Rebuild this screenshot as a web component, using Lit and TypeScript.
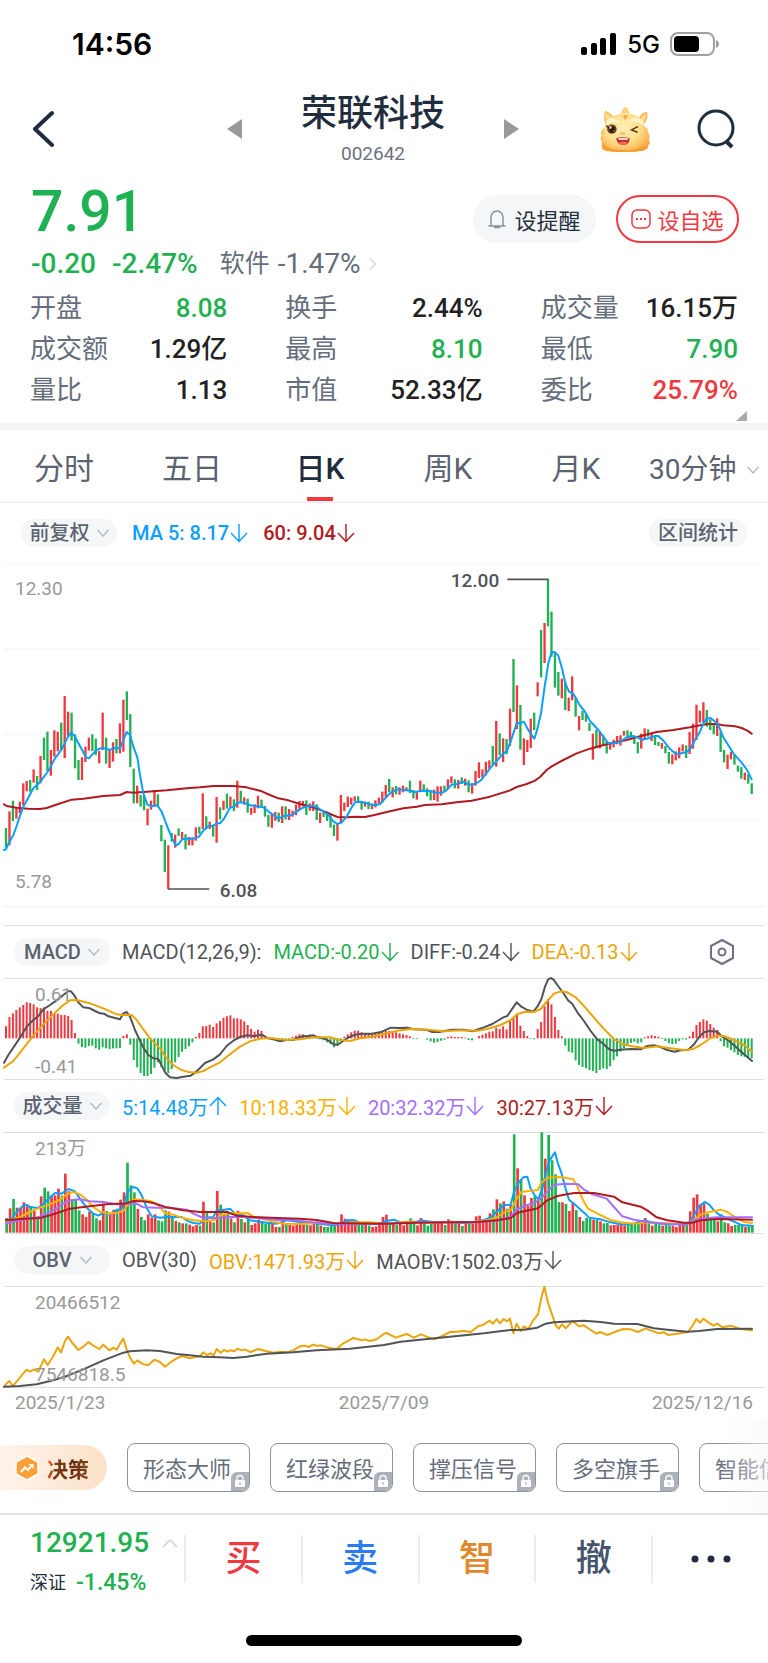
import { LitElement, html, svg, css } from "lit";
import { customElement, property, state } from "lit/decorators.js";
import { classMap } from "lit/directives/class-map.js";

const UP = "#f0393f";
const DOWN = "#1fb152";

// Chart drawings use three units per pixel.
const FIRST_X = 18;
const STEP = 10.357;
const barX = (i: number) => FIRST_X + STEP * i;

type Candle = { up: boolean; high: number; low: number };

const candles = (shift: number, text: string): Candle[] =>
  text
    .trim()
    .split(/\s+/)
    .map((item) => {
      const [high, low] = item.slice(1).split("-").map(Number);
      return { up: item[0] === "r", high: high + shift, low: low + shift };
    });

const line = (...parts: [number, number, string][]) =>
  parts
    .flatMap(([dx, dy, text]) =>
      text
        .trim()
        .split(/\s+/)
        .map((p) => {
          const [x, y] = p.split(",").map(Number);
          return `${x + dx},${y + dy}`;
        })
    )
    .join(" ");

const nums = (text: string) => text.trim().split(/\s+/).map(Number);

const PRICE: Candle[] = [
  ...candles(0, `g834-893 r784-886 g752-813 r772-806 r755-790 r700-765 r693-724 g690-725 r658-698 g678-720
    r618-700 g563-630 g545-663 r600-677 r541-620 r545-604 g518-600 r438-624 r485-560 g488-572
    g553-655 g630-690 r622-690 r590-636 r563-602 g553-603 g566-615 r603-640 r488-600 g563-641
    r598-654 r577-635 g567-610 r520-610 r449-605 g424-510 g492-651 g656-760 r707-760 g735-770
    g738-781 r776-826 r752-779 r720-770 g733-768 g825-874 g869-966 r886-1017 g849-875 r854-893
    g835-858 r846-868 g853-898 r861-886 r862-886 r832-872 g830-851 r730-837 g799-838 r815-837
    g824-860 r741-878 g772-808 r752-780 g731-776 r740-773 g748-783 r692-773 g722-755 r742-764
    g746-788 r773-794 r763-789 r737-775`),
  ...candles(450, `g299-322 g318-350 g345-380 r342-383 r336-362 g338-366 r319-369 g319-358 r327-360 r332-350
    r314-345 r303-330 r303-320 g301-345 r310-332 r304-333 g313-360 r338-369 g335-351 g335-363
    g345-383 g374-408 r370-422 r285-370 r308-333 r290-321 r293-314 r289-304 g289-309 g305-329
    r305-320 g305-327 r311-327 r301-322 r293-310 r275-308 r255-292 g237-277 r262-292 g258-283
    r262-284 r257-277 r262-273 g242-279 g270-295 r275-299 r242-275 g253-275 g265-289 g270-301
    r269-300 r259-305 r259-287 g257-275 r238-265 r229-250 g238-265 r240-266 g232-252 r236-257
    g241-277 r250-281 r213-257 r187-234 r208-233 r185-226 r181-206 g138-195 r63-200 g100-165
    r115-186 g117-163`),
  ...candles(0, `r476-587 g327-486 r406-537 g465-599 r565-645 r570-606 r506-594 g488-540 r397-439 g240-382
    r219-339 g88-229 g185-320 g305-413 g366-437 r386-445 g395-480 r443-483 r379-451 g443-500
    r498-541 g482-510 g490-515 g519-543 r551-629 g540-595 r544-595 g556-588 g573-610 r577-599
    r569-592 r558-583 r556-587 r543-557 g541-565 g545-563 g556-582 g576-610 r551-596 r535-570
    g538-560 r552-573 g560-585 g576-588 r579-596 g588-610 g606-641 r613-643 r604-631 r592-625
    r583-604 g586-624 r546-612 r521-596 r464-570 r482-518 r457-517 g480-530 g508-540 g524-553
    r505-558 g545-606 g600-637 r614-657 r605-628 g613-644 g647-665 g651-686 r668-690 g674-701
    g700-732`),
];

const MA5 = line(
  [0, 0, `12,900 18,898 25,882 40,855 50,828 60,797 70,770 80,752 100,715 121,695 132,680 145,663 165,625 185,598
    204,560 214,547 225,560 245,598 258,622 267,625 277,613 290,600 308,593 318,597 330,599 345,594 360,595 370,570
    380,546 390,555 400,590 412,622 420,675 430,730 442,764 455,769 472,766 485,785 500,825 515,862 527,886 536,882
    546,868 556,866 580,866 597,860 610,842 625,828 640,827 650,820 660,820 672,806 690,773 702,770 712,758 725,757
    745,763`],
  [750, 450, `0,316 15,318 40,322 60,338 85,356 100,349 125,345 140,335 155,325 170,319 185,317 200,321 220,335
    235,345 250,364 262,372 275,367 290,350 305,322 316,306 330,305 345,308 360,313 375,316 390,312 405,296 420,280
    440,268 455,269 480,272 495,276 515,272 540,273 560,279 580,277 590,270 605,254 620,252 640,245 655,254 675,252
    690,243`],
  [1320, 0, `125,688 150,655 170,633 190,610 200,604 210,580 220,550 231,518 240,520 252,515 262,535 275,555
    283,566 290,545 303,490 314,410 325,340 335,306 345,307 355,317 366,355 376,400 387,425 400,432 410,448 418,464
    435,485 450,513 475,540 490,560 505,580 520,580 540,576 560,562 575,558 590,561 605,570 625,565 645,558 655,558
    670,572 690,597 705,610 715,612 740,606 750,598 765,570 780,545 790,520 800,506 812,504 822,512 835,525 850,562
    880,610 905,638 920,658 935,688`]
);

const MA60 = line(
  [0, 0, `12,763 20,768 50,773 85,776 120,777 140,774 175,762 215,749 250,746 310,738 360,735 380,726 400,728
    440,725 500,721 560,715 600,712 640,708 700,708 740,712`],
  [750, 450, `0,265 30,272 60,285 85,295 115,301 150,312 190,322 230,337 262,351 290,352 320,350 345,351 370,346
    420,334 460,325 500,320 525,315 575,313 620,307 665,302 720,290 780,271`],
  [1320, 0, `230,711 260,702 285,692 300,681 320,660 335,649 370,630 410,610 450,596 500,583 560,570 600,559
    650,546 700,540 750,532 800,522 830,522 850,526 885,529 905,534 922,542 935,551`]
);

const MACD_BARS = nums(`36 64 75 85 93 100 108 106 102 93 91 93 82 82 76 74 70 70 67 55 16 -16 -26 -28 -23 -22 -30
  -34 -27 -30 -32 -30 -30 -29 7 12 -19 -65 -87 -104 -113 -113 -107 -88 -72 -86 -95 -104 -92 -72 -56 -40 -32 -24 -12
  4 16 36 37 41 34 45 52 62 66 69 60 60 57 51 40 28 20 26 22 3 -3 -4 -6 -6 -6 -6 -5 4 8 12 12 9 12 8 -2 -3 -6 -12
  -17 -27 -20 -6 5 12 18 23 23 18 16 16 15 15 20 22 24 22 20 18 15 12 10 6 -2 -2 0 0 -4 -9 -13 -11 -7 -4 4 6 4 4 4
  2 -5 -6 0 7 11 15 20 21 32 28 36 27 52 62 72 38 22 7 -2 -3 28 49 96 118 102 64 25 6 -22 -40 -43 -66 -80 -86 -90
  -95 -98 -104 -95 -90 -92 -84 -66 -54 -40 -30 -22 -14 -10 -15 -12 3 6 9 7 5 -2 -8 -15 -17 -16 -8 -3 -4 6 20 40 49
  57 53 43 32 25 -8 -24 -28 -35 -42 -50 -54 -55 -60 -60`);

const DIFF = line(
  [0, 0, `12,443 25,420 40,398 60,368 80,335 100,315 115,303 130,283 150,270 170,256 190,240 204,229 213,229
    222,240 235,262 250,277 270,280 285,288 300,295 312,296 325,304 345,309 360,313 370,295 380,291 390,305 405,345
    418,373 430,398 445,420 460,430 475,432 485,452 497,475 510,487 530,489 550,485 572,482 585,473 600,459 615,444
    640,433 660,418 680,393 700,377 720,366 740,361 760,363 785,359 800,368 820,373 840,379 860,375 880,375 895,368
    910,363 925,364 940,361 955,367 975,371 990,380 1000,388 1012,390 1025,381 1045,368 1065,359 1085,356 1115,356
    1140,352 1152,347`],
  [1152, 0, `20,338 45,339 70,338 90,343 125,344 145,351 165,351 185,347 205,344 240,344 265,349 285,342 300,337
    325,327 340,318 358,307 370,303 385,281 398,262 412,275 430,285 448,290 460,275 472,253 483,215 492,194 500,189
    508,193 520,210 540,237 552,256 565,267 580,292 600,318 620,348 640,373 655,384 675,403 690,407 710,404 740,402
    770,403 790,393 810,391 830,396 850,405 872,410 890,406 912,405 930,388 945,366 960,352 975,348 1000,350
    1012,363 1035,378 1055,395 1080,418 1104,438`]
);

const DEA = line(
  [0, 0, `12,458 40,438 70,400 100,362 130,328 160,298 190,270 210,256 230,255 270,265 310,280 350,298 370,300
    395,300 410,315 430,343 450,370 480,400 500,430 520,450 540,463 565,471 590,473 610,468 630,457 660,442 690,418
    720,395 750,379 780,371 810,369 860,375 900,373 940,367 990,367 1020,375 1050,378 1080,370 1110,366`],
  [1152, 0, `0,357 40,347 80,342 130,344 180,349 230,346 280,347 310,342 350,330 380,315 400,297 425,290 450,291
    470,282 490,258 510,236 530,229 550,232 575,247 600,273 630,308 660,342 690,372 715,387 740,393 780,399 820,394
    860,400 900,405 925,403 950,390 980,369 1000,362 1020,363 1050,375 1080,390 1104,410`]
);

const VOLUME = nums(`293 264 236 262 263 246 252 258 272 288 228 202 213 226 225 205 226 160 213 236 238 270 282
  290 274 280 294 300 250 272 283 268 265 238 216 127 195 216 266 290 300 282 292 282 300 303 270 274 290 302 306
  309 309 313 318 314 316 244 275 304 306 212 253 284 272 294 306 271 296 306 294 314 309 298 304 310 305 308 320
  320 300 312 314 316 310 312 308 313 315 307 303 316 320 320 316 308 312 282 295 298 300 302 310 312 304 316 320
  318 305 290 283 308 308 314 309 315 308 294 310 315 293 304 316 310 306 303 306 314 297 308 309 309 317 308 306
  309 288 286 300 301 279 267 237 249 243 265 254 42 144 178 225 257 233 228 240 36 115 44 120 162 245 246 251 272
  246 269 290 302 293 296 298 299 303 309 308 315 314 313 313 315 314 314 310 302 306 293 307 316 308 313 316 313
  315 316 320 313 314 312 273 232 222 252 250 280 290 298 303 282 306 309 317 314 314 312 320 318 314`);

const VOL5 = line(
  [0, 0, `18,300 35,296 50,275 65,260 75,253 90,260 105,262 115,262 130,250 145,236 165,218 185,220 205,206
    225,213 240,235 260,262 280,280 295,286 310,278 335,280 350,270 365,265 375,240 385,212 400,200 412,204 425,225
    440,262 455,288 480,292 505,289 530,290 545,290 565,303 580,308 600,310 615,292 640,290 650,270 665,270 690,265
    705,280 730,285 750,300 770,303 800,307 830,310 860,300 900,305 950,310 1000,315 1020,312 1040,300 1065,300
    1080,308 1110,312`],
  [1152, 0, `-10,310 5,302 30,298 50,307 80,309 110,300 150,306 200,304 240,308 270,305 300,299 320,291 340,272
    360,255 380,253 390,215 405,185 418,171 430,169 440,205 452,225 463,237 475,205 485,160 495,125 505,107 513,96
    522,130 533,160 545,205 555,238 575,255 600,277 615,292 650,297 680,306 710,312 740,312 780,300 810,308 850,312
    900,312 918,305 930,285 945,258 962,245 975,252 990,270 1005,283 1025,293 1050,304 1075,315 1104,316`]
);
const VOL10 = line(
  [0, 0, `18,303 60,290 90,275 120,262 150,252 180,238 200,222 220,215 240,222 262,240 280,260 300,274 325,279
    350,278 370,272 385,250 400,237 425,238 455,243 475,255 495,278 520,283 545,292 580,300 620,303 645,298 665,283
    700,278 745,279 765,292 790,296 820,304 850,310 900,311 950,308 1020,311 1060,306 1110,306 1152,311`],
  [1152, 0, `80,303 130,307 200,304 270,305 310,300 340,290 365,273 380,270 395,240 412,215 440,211 462,209
    472,187 490,172 530,170 550,174 567,176 580,198 595,235 612,265 645,282 680,299 710,306 750,310 790,306 830,308
    880,310 915,308 930,298 950,283 975,275 1010,268 1030,275 1055,292 1080,305 1104,308`]
);
const VOL20 = line(
  [0, 0, `18,309 50,302 80,295 110,293 140,280 165,268 190,250 210,240 240,237 270,243 310,245 350,252 380,250
    410,250 430,261 470,262 510,262 560,268 580,280 610,293 650,293 690,290 730,290 780,294 830,299 880,299 920,304
    1000,312 1152,310`],
  [1152, 0, `100,306 270,306 330,302 380,290 395,270 420,257 450,248 470,235 490,215 510,193 550,190 583,192
    600,208 625,222 668,235 690,260 715,288 750,298 790,305 850,311 910,312 930,300 960,294 1000,291 1104,291`]
);
const VOL30 = line(
  [0, 0, `18,300 60,296 120,293 150,285 180,275 210,265 250,260 320,252 350,250 375,250 400,242 430,243 460,248
    500,261 550,270 600,275 680,275 710,286 760,290 830,293 900,295 950,299 1000,308 1152,310`],
  [1152, 0, `100,307 280,305 340,300 380,293 400,277 462,264 490,240 520,227 570,218 630,218 690,229 715,246
    770,259 790,270 818,291 850,300 900,307 925,307 950,300 1000,296 1104,298`]
);

const OBV = line(
  [0, 0, `12,797 20,787 28,780 38,795 50,782 65,763 80,746 90,752 103,745 115,752 132,715 143,732 160,705 173,679
    183,694 195,660 204,647 215,663 235,687 250,677 266,663 280,674 298,684 310,671 328,688 340,680 350,686 360,668
    370,653 380,685 390,710 402,728 412,718 430,730 445,732 463,716 480,723 495,737 510,725 530,712 545,705 570,712
    600,705 610,694 620,702 632,697 641,703 650,684 662,695 672,687 682,692 690,688 702,691 712,683 724,688 733,685
    752,693 775,684 800,691 820,695 840,692 860,694 880,688 900,676 915,674 925,678 940,671 952,675 962,673 985,680
    1010,684 1030,667 1060,651 1085,658 1095,655 1110,660 1130,655 1152,638`],
  [1152, 0, `8,636 35,650 68,639 90,650 110,640 150,655 175,645 200,632 210,633 240,630 260,633 285,614 295,613
    317,599 327,608 338,594 348,607 359,594 369,601 378,593 388,637 398,608 410,630 420,616 432,625 450,595 462,580
    472,530 481,497 492,545 505,583 515,612 524,623 534,610 545,622 565,600 585,616 600,613 620,627 637,638 648,633
    670,642 700,630 718,624 740,625 762,633 785,622 800,628 825,637 840,634 852,642 880,638 912,633 925,615 937,594
    948,605 958,593 970,602 988,614 1000,608 1015,619 1040,614 1070,624 1104,628`]
);
const MAOBV = line(
  [0, 0, `12,797 60,795 110,790 160,778 200,765 250,745 310,718 370,695 390,691 440,688 480,690 530,699 570,703
    610,707 660,709 700,711 740,707 800,698 880,694 950,688 1050,683 1152,672`],
  [1152, 0, `50,662 130,654 220,645 300,637 380,627 420,626 460,620 485,608 510,604 600,599 650,603 690,608
    760,609 810,622 850,626 910,632 945,630 1000,624 1104,623`]
);

const curve = (points: string, color: string, width = 6) => svg`
  <polyline points=${points} fill="none" stroke=${color} stroke-width=${width}
    stroke-linejoin="round" stroke-linecap="round"></polyline>`;

const chevron = html`<svg class="chevron" viewBox="0 0 12 8" width="12" height="8" aria-hidden="true">
  <path d="M0.5 1 6 7 11.5 1" fill="none" stroke="#b4bac4" stroke-width="1.4" />
</svg>`;

const arrow = (up = false) => html`<svg class="arrow" viewBox="0 0 18 20" width="18" height="20" aria-hidden="true">
  <path
    d=${up ? "M9 19V2M1 10 9 1.5 17 10" : "M9 1V18M1 10 9 18.5 17 10"}
    fill="none" stroke="currentColor" stroke-width="1.4" />
</svg>`;

@customElement("legend-item")
export class LegendItem extends LitElement {
  @property() trend = "";
  static styles = css`
    :host {
      display: flex;
      align-items: center;
      gap: 1px;
      white-space: nowrap;
    }
  `;
  render() {
    return html`<slot></slot>${this.trend ? arrow(this.trend === "up") : ""}`;
  }
}

@customElement("pill-select")
export class PillSelect extends LitElement {
  @property() name = "";
  @property({ type: Array }) options: string[] = [];
  static styles = css`
    :host {
      display: block;
      flex: none;
    }
    .pill {
      display: flex;
      align-items: center;
      justify-content: center;
      gap: 7px;
      width: 96px;
      height: 28px;
      border-radius: 14px;
      background: #f4f6f8;
    }
    .field {
      appearance: none;
      border: 0;
      padding: 0;
      margin: 0;
      background: none;
      color: #5b6370;
      font: inherit;
      font-weight: 500;
      line-height: 28px;
    }
  `;
  render() {
    return html`<label class="pill">
      <select class="field" aria-label=${this.name}>
        ${this.options.map((o) => html`<option>${o}</option>`)}
      </select>
      ${chevron}
    </label>`;
  }
}

@customElement("app-root")
export class AppRoot extends LitElement {
  @state() private tab = "日K";

  static styles = css`
    :host {
      display: block;
      background: #fff;
      color: #1f2d3d;
      font-family: Roboto, "Noto Sans CJK SC", sans-serif;
      font-size: 20px;
      overflow: hidden;
    }
    button {
      border: 0;
      padding: 0;
      margin: 0;
      background: none;
      font: inherit;
      color: inherit;
      cursor: pointer;
    }
    svg {
      display: block;
    }
    .green { color: #1fb152; }
    .red { color: #f0393f; }

    .status {
      display: flex;
      align-items: center;
      justify-content: space-between;
      height: 88px;
      padding: 0 49px 0 72px;
      font-family: Inter, sans-serif;
      color: #000;
    }
    .clock { font-size: 30px; font-weight: 600; }
    .signals { display: flex; align-items: center; gap: 10px; }
    .network { font-size: 24px; font-weight: 500; }

    .header {
      display: grid;
      grid-template-columns: 1fr auto 1fr;
      align-items: center;
      height: 82px;
      padding: 0 33px;
    }
    .switcher {
      display: flex;
      align-items: center;
      justify-content: space-between;
      width: 292px;
      margin-right: 22px;
    }
    .name {
      margin: 0;
      font-size: 36px;
      font-weight: 500;
      line-height: 44px;
    }
    .code {
      margin: 6px 0 0;
      color: #6b7280;
      font-size: 19px;
      line-height: 24px;
      text-align: center;
    }
    .actions {
      display: flex;
      align-items: center;
      justify-content: flex-end;
      gap: 47px;
    }

    .quote {
      display: flex;
      justify-content: space-between;
      align-items: flex-start;
      padding: 12px 29px 8px 31px;
    }
    .price {
      font-size: 57px;
      font-weight: 500;
      line-height: 60px;
    }
    .change {
      display: flex;
      align-items: center;
      gap: 16px;
      margin-top: 6px;
      font-size: 28px;
      font-weight: 500;
      line-height: 32px;
    }
    .sector {
      display: flex;
      align-items: center;
      gap: 8px;
      margin-left: 6px;
      color: #666e7c;
      font-weight: 400;
      text-decoration: none;
    }
    .sector-name { font-size: 25px; }
    .quote-buttons { display: flex; gap: 20px; margin-top: 13px; }
    .round {
      display: flex;
      align-items: center;
      justify-content: center;
      gap: 8px;
      box-sizing: border-box;
      width: 123px;
      height: 48px;
      border-radius: 24px;
      background: #f4f6f8;
      font-size: 22px;
    }
    .round.outline {
      background: #fff;
      color: #f0393f;
      border: 2px solid #f0393f;
      gap: 6px;
    }

    .stats {
      display: grid;
      grid-template-columns: repeat(3, 1fr);
      column-gap: 58px;
      margin: 0;
      padding: 0 30px;
    }
    .stat {
      display: flex;
      justify-content: space-between;
      font-size: 26px;
      line-height: 41px;
      white-space: nowrap;
    }
    .stat dt { color: #666e7c; }
    .stat dd { margin: 0; color: #222; font-weight: 500; }
    .stat dd.green { color: #1fb152; }
    .stat dd.red { color: #f0393f; }
    .more {
      display: flex;
      justify-content: flex-end;
      align-items: flex-start;
      height: 12px;
      padding-right: 21px;
      border-bottom: 7px solid #f5f5f6;
    }

    .tabs {
      display: grid;
      grid-template-columns: repeat(6, 1fr);
      height: 71px;
      border-bottom: 2px solid #f0f1f2;
      font-size: 30px;
      color: #5b6370;
    }
    .tab {
      display: flex;
      flex-direction: column;
      align-items: center;
      justify-content: flex-end;
      gap: 6px;
      line-height: 44px;
    }
    .tab::after { content: ""; width: 26px; height: 4px; }
    .tab.active { color: #1f2d3d; font-weight: 500; }
    .tab.active::after { background: #f0393f; }
    .period {
      display: flex;
      align-items: center;
      justify-content: center;
      gap: 10px;
      padding-top: 8px;
    }
    .period select {
      appearance: none;
      border: 0;
      padding: 0;
      background: none;
      color: inherit;
      font: inherit;
      font-size: 28px;
      line-height: 44px;
    }

    .filters {
      display: flex;
      align-items: center;
      gap: 15px;
      padding: 16px 21px 3px;
      font-weight: 500;
    }
    .range {
      width: 98px;
      height: 28px;
      margin-left: auto;
      border-radius: 14px;
      background: #f4f6f8;
      color: #5b6370;
      line-height: 28px;
    }
    .blue { color: #0a9fff; }
    .wine { color: #b01a22; }
    .grey { color: #505357; }
    .gold { color: #eba50a; }
    .amber { color: #fbb100; }
    .violet { color: #a56eff; }

    .chart { position: relative; }
    .plot { width: 100%; height: auto; overflow: visible; }
    .scale {
      position: absolute;
      left: 35px;
      color: #999;
      font-size: 19px;
      line-height: 24px;
    }
    .main .scale { left: 15px; }
    .top { top: 4px; }
    .bottom { bottom: 0; }
    .main .top { top: 27px; }
    .main .bottom { bottom: 31px; }
    .mark {
      position: absolute;
      color: #505357;
      font-size: 19px;
      line-height: 24px;
      font-weight: 500;
    }
    .highest { right: 35%; top: 5%; }
    .lowest { left: 28.6%; bottom: 22px; }

    .indicator {
      display: flex;
      align-items: center;
      gap: 12px;
      box-sizing: border-box;
      height: 54px;
      margin: 0 4px;
      padding: 0 30px 0 10px;
      border-top: 1px solid #dedfe1;
      border-bottom: 1px solid #dedfe1;
    }
    .settings { margin-left: auto; }
    .dates {
      display: grid;
      grid-template-columns: 1fr auto 1fr;
      margin: 0 4px;
      padding: 0 11px;
      border-top: 1px solid #dedfe1;
      color: #999;
      font-size: 19px;
      line-height: 30px;
    }
    .last-date { text-align: right; }

    .tools {
      display: flex;
      align-items: center;
      gap: 20px;
      height: 49px;
      padding: 25px 0 21px;
      overflow: hidden;
      position: relative;
    }
    .tools::after {
      content: "";
      position: absolute;
      inset: 0 0 0 auto;
      width: 50px;
      background: linear-gradient(90deg, rgba(250, 250, 252, 0), rgba(247, 248, 250, 0.6));
      pointer-events: none;
    }
    .decision {
      display: flex;
      align-items: center;
      gap: 8px;
      flex: none;
      box-sizing: border-box;
      width: 107px;
      height: 45px;
      padding-left: 15px;
      border-radius: 0 23px 23px 0;
      background: linear-gradient(90deg, #fff3eb, #fbe2c8);
      font-size: 21px;
      font-weight: 700;
    }
    .decision-text {
      background: linear-gradient(100deg, #ff5a1f 8%, #7b3a17 20%, #6a3010 60%, #8a4a22);
      background-clip: text;
      -webkit-background-clip: text;
      color: transparent;
    }
    .tool {
      position: relative;
      flex: none;
      box-sizing: border-box;
      width: 123px;
      height: 49px;
      padding: 0 0 2px 15px;
      border: 1px solid #8c929e;
      border-radius: 8px;
      color: #666e7c;
      font-size: 22px;
      text-align: left;
      white-space: nowrap;
    }
    .lock { position: absolute; right: 0; bottom: 0; }

    .bar {
      display: flex;
      align-items: flex-start;
      border-top: 2px solid #e2e3e5;
      padding-top: 9px;
    }
    .index {
      display: grid;
      grid-template-columns: auto auto;
      justify-content: space-between;
      align-items: center;
      flex: none;
      box-sizing: border-box;
      width: 184px;
      padding: 0 6px 0 30px;
      line-height: 38px;
    }
    .index-value { font-size: 28px; font-weight: 500; }
    .index-row {
      display: flex;
      gap: 10px;
      font-size: 18px;
      grid-column: 1 / -1;
      line-height: 42px;
      align-items: center;
    }
    .index-change { font-size: 23px; font-weight: 500; }
    .trades {
      display: grid;
      grid-template-columns: repeat(5, 1fr);
      flex: 1;
      margin-top: 11px;
    }
    .trade {
      display: flex;
      align-items: center;
      justify-content: center;
      height: 48px;
      border-left: 2px solid #ededf0;
      font-size: 36px;
      font-weight: 500;
      line-height: 48px;
    }
    .buy { color: #f0393f; }
    .sell { color: #2a7bf5; }
    .smart { color: #e0892c; }
    .cancel { color: #44546c; }
    .home { padding: 31px 0 16px; }
    .home-line {
      width: 36%;
      height: 11px;
      margin: 0 auto;
      border-radius: 6px;
      background: #000;
    }
  `;

  private stat(label: string, value: string, tone = "") {
    return html`<div class="stat"><dt>${label}</dt><dd class=${tone}>${value}</dd></div>`;
  }

  private dragon() {
    return html`<svg viewBox="420 33 148 134" width="50" height="45" aria-hidden="true">
      <defs>
        <radialGradient id="face" cx="0.45" cy="0.4" r="0.65">
          <stop offset="0" stop-color="#fff0b4" />
          <stop offset="0.6" stop-color="#fddf8c" />
          <stop offset="1" stop-color="#f9b552" />
        </radialGradient>
        <linearGradient id="mane" x1="0" y1="0" x2="0" y2="1">
          <stop offset="0" stop-color="#fbd071" />
          <stop offset="1" stop-color="#f79a2e" />
        </linearGradient>
      </defs>
      <path d="M436 92c-10 6-14 14-15 24l6-2c-6 7-7 14-3 22l4-3c-4 8-4 16-2 24 14 8 36 10 68 9 28 0 54 0 68-10l2-12 3 2c2-8 0-14-4-20l5 1c0-8-2-15-8-20l4-2c-3-9-8-13-16-16z" fill="url(#mane)" />
      <path d="M436 84c-5-13-5-26-1-40 10 3 19 10 24 20zM545 88c14-10 19-26 15-41-13 1-21 9-25 20z" fill="#f9bb5c" />
      <path d="M440 78c-5-9-5-19-3-28 7 3 13 8 16 15zM545 80c9-9 13-18 12-28-8 3-13 9-16 17z" fill="#fddb90" />
      <path d="M432 106c0-36 26-54 62-54s60 20 60 56c8 12 7 26-3 36-12 14-31 18-57 18s-48-4-60-18c-9-10-10-26-2-38z" fill="url(#face)" />
      <path d="M482 54c0-5 2-8 5-10 0-6 4-11 8-11 5 0 9 5 8 11 4 2 5 6 4 10-8-4-17-4-25 0z" fill="#fbd070" />
      <path d="M489 60c2-5 12-6 13 1 0 5-5 8-8 9-3-1-6-6-5-10z" fill="#f4ac52" />
      <path d="M437 86c-2-14 8-22 22-19 12 2 22 7 18 14-12-3-26-2-40 5zM506 80c2-12 16-18 30-13 12 4 18 13 12 20-14-8-28-10-42-7z" fill="#fff3c4" />
      <circle cx="455" cy="99" r="14" fill="#6a3c17" />
      <circle cx="456" cy="100" r="8" fill="#2f1608" />
      <circle cx="450" cy="94" r="4" fill="#fff" />
      <circle cx="461" cy="104" r="2" fill="#e7c7a0" />
      <path d="M439 90l8 5M531 92l-18 9 17 7" fill="none" stroke="#4a2a12" stroke-width="4" stroke-linecap="round" />
      <ellipse cx="487" cy="112" rx="8" ry="4" fill="#f7b95c" />
      <path d="M468 126c12-4 28-4 40 0 0 12-7 20-19 20s-20-8-21-20z" fill="#c92c22" />
      <path d="M473 127c10-2 21-2 31 0l-3 4c-8-1-18-1-25 0z" fill="#fff" />
      <path d="M476 140c6-5 19-5 25 0-6 7-19 7-25 0z" fill="#ff6a55" />
      <path d="M426 152c40 14 96 14 134-1-2 7-4 9-12 12-36 5-74 5-108 1-8-2-12-5-14-12z" fill="#f79c32" />
    </svg>`;
  }

  private lock() {
    return html`<svg class="lock" viewBox="0 0 18 19" width="18" height="19" aria-hidden="true">
      <path d="M0 19V6a6 6 0 0 1 6-6h12v12a7 7 0 0 1-7 7z" fill="#adb1ba" />
      <path d="M6 8V6.500a3 3 0 0 1 6 0V8" fill="none" stroke="#fff" stroke-width="1.300" />
      <rect x="4" y="8" width="10" height="7" rx="1" fill="#fff" />
      <path d="M9 10v3" stroke="#adb1ba" stroke-width="1.200" />
    </svg>`;
  }

  private priceChart() {
    return html`<div class="chart main">
      <svg class="plot" viewBox="0 0 2304 1125" role="img" aria-label="日K线">
        ${[41, 297, 552, 808].map(
          (y) => svg`<path d=${`M12 ${y}H2292`} stroke="#f5f5f6" stroke-width="4" stroke-dasharray="16 8" />`
        )}
        <path d="M12 1070H2292" stroke="#f3f3f4" stroke-width="4" />
        <path d="M2205 646H2260" stroke="#e4e5e8" stroke-width="3" />
        ${PRICE.map(
          (c, i) => svg`<path d=${`M${barX(i)} ${c.high}V${c.low}`} stroke=${c.up ? UP : DOWN} stroke-width="7" />`
        )}
        ${curve(MA60, "#b01a22")} ${curve(MA5, "#0a9fff")}
        <path d="M1522 88H1646M504 1017H628" stroke="#505357" stroke-width="5" />
      </svg>
      <span class="scale top">12.30</span>
      <span class="scale bottom">5.78</span>
      <span class="mark highest">12.00</span>
      <span class="mark lowest">6.08</span>
    </div>`;
  }

  private macdChart() {
    return html`<div class="chart">
      <svg class="plot" viewBox="0 192 2304 300" role="img" aria-label="MACD">
        ${MACD_BARS.map(
          (v, i) => svg`<path d=${`M${barX(i)} 370V${370 - v}`} stroke=${v > 0 ? UP : DOWN} stroke-width="6" />`
        )}
        ${curve(DIFF, "#505357")} ${curve(DEA, "#eba50a")}
      </svg>
      <span class="scale top">0.61</span>
      <span class="scale bottom">-0.41</span>
    </div>`;
  }

  private volumeChart() {
    return html`<div class="chart">
      <svg class="plot" viewBox="0 38 2304 300" role="img" aria-label="成交量">
        ${VOLUME.map(
          (v, i) => svg`<path d=${`M${barX(i) + 2} 337V${v}`} stroke=${PRICE[i]?.up ? UP : DOWN} stroke-width="8" />`
        )}
        ${curve(VOL5, "#0a9fff")} ${curve(VOL10, "#fbb100")} ${curve(VOL20, "#a56eff")} ${curve(VOL30, "#b01a22")}
      </svg>
      <span class="scale top">213万</span>
    </div>`;
  }

  private obvChart() {
    return html`<div class="chart">
      <svg class="plot" viewBox="0 498 2304 300" role="img" aria-label="OBV">
        ${curve(OBV, "#eba50a")} ${curve(MAOBV, "#505357")}
      </svg>
      <span class="scale top">20466512</span>
      <span class="scale bottom">7546818.5</span>
    </div>`;
  }

  render() {
    return html`
      <div class="status">
        <span class="clock">14:56</span>
        <div class="signals">
          <svg viewBox="0 0 36 23" width="36" height="23" aria-hidden="true">
            <rect x="0" y="14" width="6" height="8" rx="2" />
            <rect x="10" y="10" width="6" height="12" rx="2" />
            <rect x="19" y="5" width="6" height="17" rx="2" />
            <rect x="29" y="0" width="6" height="22" rx="2" />
          </svg>
          <span class="network">5G</span>
          <svg viewBox="0 0 49 24" width="49" height="24" aria-hidden="true">
            <rect x="1" y="1" width="43" height="22" rx="7" fill="none" stroke="#a0a0a0" stroke-width="2" />
            <rect x="4" y="4" width="25" height="16" rx="4" />
            <path d="M46 8c2 1 3 2 3 4s-1 3-3 4z" fill="#a0a0a0" />
          </svg>
        </div>
      </div>

      <header class="header">
        <button aria-label="返回">
          <svg viewBox="0 0 22 38" width="22" height="38">
            <path d="M19 3 2 19 19 35" fill="none" stroke="#1f2d3d" stroke-width="4" stroke-linecap="round" stroke-linejoin="round" />
          </svg>
        </button>
        <div class="switcher">
          <button aria-label="上一只">
            <svg viewBox="0 0 15 22" width="15" height="22"><path d="M15 1V21L0 11z" fill="#999" /></svg>
          </button>
          <div>
            <h1 class="name">荣联科技</h1>
            <p class="code">002642</p>
          </div>
          <button aria-label="下一只">
            <svg viewBox="0 0 15 22" width="15" height="22"><path d="M0 1V21L15 11z" fill="#999" /></svg>
          </button>
        </div>
        <div class="actions">
          <button aria-label="助手">${this.dragon()}</button>
          <button aria-label="搜索">
            <svg viewBox="0 0 38 40" width="38" height="40">
              <circle cx="19" cy="19" r="17" fill="none" stroke="#1f2d3d" stroke-width="3" />
              <path d="m29 32 6 6" stroke="#1f2d3d" stroke-width="4" />
            </svg>
          </button>
        </div>
      </header>

      <section class="quote">
        <div>
          <div class="price green">7.91</div>
          <div class="change">
            <span class="green">-0.20</span>
            <span class="green">-2.47%</span>
            <a class="sector" href="#sector"><span class="sector-name">软件</span><span>-1.47%</span>
              <svg viewBox="0 0 10 16" width="8" height="14" aria-hidden="true">
                <path d="M1 1 8 8 1 15" fill="none" stroke="#cfd2d8" stroke-width="1.500" />
              </svg>
            </a>
          </div>
        </div>
        <div class="quote-buttons">
          <button class="round">
            <svg viewBox="0 0 18 20" width="18" height="20" aria-hidden="true">
              <path d="M1 17h16M3 17V8a6 6 0 0 1 12 0v9M6.500 18.500h5" fill="none" stroke="#8a909b" stroke-width="1.500" stroke-linecap="round" />
            </svg>
            设提醒
          </button>
          <button class="round outline">
            <svg viewBox="0 0 20 20" width="20" height="20" aria-hidden="true">
              <rect x="1" y="1" width="18" height="18" rx="5" fill="none" stroke="currentColor" stroke-width="1.500" />
              <path d="M5 9h2v2H5zM9 9h2v2H9zM13 9h2v2h-2z" fill="currentColor" />
            </svg>
            设自选
          </button>
        </div>
      </section>

      <dl class="stats">
        ${this.stat("开盘", "8.08", "green")} ${this.stat("换手", "2.44%")} ${this.stat("成交量", "16.15万")}
        ${this.stat("成交额", "1.29亿")} ${this.stat("最高", "8.10", "green")} ${this.stat("最低", "7.90", "green")}
        ${this.stat("量比", "1.13")} ${this.stat("市值", "52.33亿")} ${this.stat("委比", "25.79%", "red")}
      </dl>
      <div class="more">
        <svg viewBox="0 0 11 10" width="11" height="10" aria-hidden="true">
          <path d="M0 10 11 0V10z" fill="#a6a9ae" />
        </svg>
      </div>

      <nav class="tabs" role="tablist">
        ${["分时", "五日", "日K", "周K", "月K"].map(
          (t) => html`<button
            role="tab"
            aria-selected=${t === this.tab}
            class=${classMap({ tab: true, active: t === this.tab })}
            @click=${() => (this.tab = t)}
          >${t}</button>`
        )}
        <label class="period">
          <select aria-label="分钟周期">
            <option>30分钟</option>
            <option>5分钟</option>
          </select>
          ${chevron}
        </label>
      </nav>

      <div class="filters">
        <pill-select name="复权" .options=${["前复权", "后复权", "不复权"]}></pill-select>
        <legend-item class="blue" trend="down">MA 5: 8.17</legend-item>
        <legend-item class="wine" trend="down">60: 9.04</legend-item>
        <button class="range">区间统计</button>
      </div>
      ${this.priceChart()}

      <div class="indicator">
        <pill-select name="指标一" .options=${["MACD", "KDJ"]}></pill-select>
        <legend-item class="grey">MACD(12,26,9):</legend-item>
        <legend-item class="green" trend="down">MACD:-0.20</legend-item>
        <legend-item class="grey" trend="down">DIFF:-0.24</legend-item>
        <legend-item class="gold" trend="down">DEA:-0.13</legend-item>
        <button class="settings" aria-label="指标设置">
          <svg viewBox="0 0 24 26" width="24" height="26">
            <path d="M12 1 23 7V19L12 25 1 19V7z" fill="none" stroke="#6a7180" stroke-width="2" stroke-linejoin="round" />
            <circle cx="12" cy="13" r="3.500" fill="none" stroke="#6a7180" stroke-width="2" />
          </svg>
        </button>
      </div>
      ${this.macdChart()}

      <div class="indicator">
        <pill-select name="指标二" .options=${["成交量", "成交额"]}></pill-select>
        <legend-item class="blue" trend="up">5:14.48万</legend-item>
        <legend-item class="amber" trend="down">10:18.33万</legend-item>
        <legend-item class="violet" trend="down">20:32.32万</legend-item>
        <legend-item class="wine" trend="down">30:27.13万</legend-item>
      </div>
      ${this.volumeChart()}

      <div class="indicator">
        <pill-select name="指标三" .options=${["OBV", "VR"]}></pill-select>
        <legend-item class="grey">OBV(30)</legend-item>
        <legend-item class="gold" trend="down">OBV:1471.93万</legend-item>
        <legend-item class="grey" trend="down">MAOBV:1502.03万</legend-item>
      </div>
      ${this.obvChart()}

      <div class="dates">
        <span>2025/1/23</span><span>2025/7/09</span><span class="last-date">2025/12/16</span>
      </div>

      <div class="tools">
        <button class="decision">
          <svg viewBox="0 0 24 26" width="24" height="26" aria-hidden="true">
            <path d="M12 1 22 6.500Q23 7 23 8V18Q23 19 22 19.500L12 25 2 19.500Q1 19 1 18V8Q1 7 2 6.500z" fill="#ff9f38" stroke="#fff" stroke-width="1.500" />
            <path d="M6 17 10 12.500 13 15 17 10" fill="none" stroke="#fff" stroke-width="2" />
            <path d="M13.500 9H18.500V14z" fill="#fff" />
          </svg>
          <span class="decision-text">决策</span>
        </button>
        ${["形态大师", "红绿波段", "撑压信号", "多空旗手", "智能信号"].map(
          (t) => html`<button class="tool">${t}${this.lock()}</button>`
        )}
      </div>

      <footer>
        <div class="bar">
          <div class="index">
            <span class="index-value green">12921.95</span>
            <svg viewBox="0 0 16 9" width="16" height="9" aria-hidden="true">
              <path d="M1 8 8 1 15 8" fill="none" stroke="#cfd2d8" stroke-width="1.500" />
            </svg>
            <div class="index-row"><span>深证</span><span class="index-change green">-1.45%</span></div>
          </div>
          <div class="trades">
            <button class="trade buy">买</button>
            <button class="trade sell">卖</button>
            <button class="trade smart">智</button>
            <button class="trade cancel">撤</button>
            <button class="trade" aria-label="更多">
              <svg viewBox="0 0 42 10" width="42" height="10">
                <circle cx="5" cy="5" r="3.500" fill="#1f2d3d" />
                <circle cx="21" cy="5" r="3.500" fill="#1f2d3d" />
                <circle cx="37" cy="5" r="3.500" fill="#1f2d3d" />
              </svg>
            </button>
          </div>
        </div>
        <div class="home"><div class="home-line"></div></div>
      </footer>
    `;
  }
}
